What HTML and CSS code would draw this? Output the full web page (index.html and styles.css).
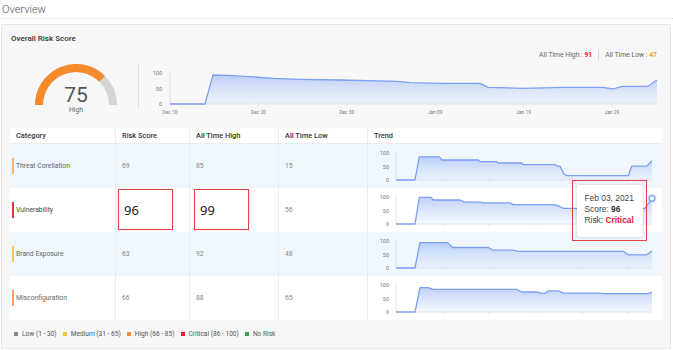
FILE: index.html
```html
<!DOCTYPE html>
<html>
<head>
<meta charset="utf-8">
<link rel="stylesheet" href="styles.css">
</head>
<body>
<div class="page">
  <div class="pagehead">Overview</div>
  <div class="card">
    <div class="card-title">Overall Risk Score</div>
    <div class="stats">
      <span>All Time High : <b class="hi">91</b></span>
      <span class="vsep"></span>
      <span>All Time Low : <b class="lo">47</b></span>
    </div>
    <div class="summary">
      <div class="gauge">
        <svg width="128" height="55" viewBox="0 0 128 55">
          <path d="M29 41 A37 37 0 0 1 103 41" fill="none" stroke="#d4d4d4" stroke-width="8"/>
          <path d="M29 41 A37 37 0 0 1 92.16 14.84" fill="none" stroke="#f68a2b" stroke-width="8"/>
          <text x="66" y="37.7" text-anchor="middle" class="g-num">75</text>
          <text x="66" y="48" text-anchor="middle" class="g-lbl">High</text>
        </svg>
      </div>
      <div class="divider"></div>
      <svg class="main-chart" width="522" height="55" viewBox="0 0 522 55">
        <defs>
          <linearGradient id="fillg" x1="0" y1="0" x2="0" y2="1">
            <stop offset="0" stop-color="#a8c1f7" stop-opacity="0.75"/>
            <stop offset="1" stop-color="#dbe6fb" stop-opacity="0.35"/>
          </linearGradient>
        </defs>
        <g class="axis-lbl" text-anchor="end">
          <text x="22" y="11">100</text>
          <text x="22" y="27">50</text>
          <text x="22" y="42">0</text>
        </g>
        <line x1="30" y1="8" x2="30" y2="40" class="ax"/>
        <line x1="30" y1="40" x2="517" y2="40" class="ax"/>
        <g class="ax">
          <line x1="30" y1="40" x2="30" y2="42"/>
          <line x1="118.4" y1="40" x2="118.4" y2="42"/>
          <line x1="206.8" y1="40" x2="206.8" y2="42"/>
          <line x1="295.2" y1="40" x2="295.2" y2="42"/>
          <line x1="383.6" y1="40" x2="383.6" y2="42"/>
          <line x1="472" y1="40" x2="472" y2="42"/>
        </g>
        <g class="tick-lbl" text-anchor="middle">
          <text x="30" y="50">Dec 10</text>
          <text x="118.4" y="50">Dec 20</text>
          <text x="206.8" y="50">Dec 30</text>
          <text x="295.2" y="50">Jan 09</text>
          <text x="383.6" y="50">Jan 19</text>
          <text x="472" y="50">Jan 29</text>
        </g>
        <polygon class="area" points="30,40 65,40 73,11 93,11.7 110,12.7 133,14.3 160,15.3 200,16 257,17.3 270,18.7 303,19.3 340,19.3 348,23.3 383,24.3 423,23.3 463,23.3 473,25 482,22.3 508,22.3 517,16 517,40"/>
        <polyline class="line" points="30,40 65,40 73,11 93,11.7 110,12.7 133,14.3 160,15.3 200,16 257,17.3 270,18.7 303,19.3 340,19.3 348,23.3 383,24.3 423,23.3 463,23.3 473,25 482,22.3 508,22.3 517,16"/>
      </svg>
    </div>

    <div class="table">
      <div class="row head">
        <div class="cell">Category</div>
        <div class="cell">Risk Score</div>
        <div class="cell">All Time High</div>
        <div class="cell">All Time Low</div>
        <div class="cell">Trend</div>
      </div>

      <div class="row alt">
        <div class="cell"><span class="cat c-high">Threat Corellation</span></div>
        <div class="cell val">69</div>
        <div class="cell val">85</div>
        <div class="cell val">15</div>
        <div class="cell trend">
          <svg width="295" height="44" viewBox="0 0 295 44">
            <g class="axis-lbl" text-anchor="end"><text x="21" y="11">100</text><text x="21" y="24.5">50</text><text x="21" y="38">0</text></g>
            <line x1="28" y1="8" x2="28" y2="36" class="ax"/>
            <line x1="28" y1="36" x2="284" y2="36" class="ax"/>
            <g class="ax"><line x1="75" y1="36" x2="75" y2="38"/><line x1="121" y1="36" x2="121" y2="38"/><line x1="168" y1="36" x2="168" y2="38"/><line x1="214" y1="36" x2="214" y2="38"/><line x1="260" y1="36" x2="260" y2="38"/></g>
            <polygon class="area" points="28,36 47,36 51.3,12.8 71.3,12.8 73.7,16 110.3,16 112,17.6 128.7,17.6 130,19 153.7,19 155,20.6 187,20.6 189,22.2 192,22.2 196,30.1 199,31.7 260.3,31.7 263.7,22.2 278.7,22.2 284,16.6 284,36"/>
            <polyline class="line" points="28,36 47,36 51.3,12.8 71.3,12.8 73.7,16 110.3,16 112,17.6 128.7,17.6 130,19 153.7,19 155,20.6 187,20.6 189,22.2 192,22.2 196,30.1 199,31.7 260.3,31.7 263.7,22.2 278.7,22.2 284,16.6"/>
          </svg>
        </div>
      </div>

      <div class="row">
        <div class="cell"><span class="cat c-crit dark">Vulnerability</span></div>
        <div class="cell boxed"><div class="mark">96</div></div>
        <div class="cell boxed wide"><div class="mark">99</div></div>
        <div class="cell val">56</div>
        <div class="cell trend">
          <svg width="295" height="44" viewBox="0 0 295 44">
            <g class="axis-lbl" text-anchor="end"><text x="21" y="11">100</text><text x="21" y="24.5">50</text><text x="21" y="38">0</text></g>
            <line x1="28" y1="8" x2="28" y2="36" class="ax"/>
            <line x1="28" y1="36" x2="284" y2="36" class="ax"/>
            <g class="ax"><line x1="75" y1="36" x2="75" y2="38"/><line x1="121" y1="36" x2="121" y2="38"/><line x1="168" y1="36" x2="168" y2="38"/><line x1="214" y1="36" x2="214" y2="38"/><line x1="260" y1="36" x2="260" y2="38"/></g>
            <polygon class="area" points="28,36 47,36 51.3,9.3 62.7,9.3 65.3,12 92,12 97,14.1 112,14.1 115.3,14.9 142,14.9 145.3,16.6 185.3,16.6 192,18.5 195.3,20.3 277,20.3 284,10.4 284,36"/>
            <polyline class="line" points="28,36 47,36 51.3,9.3 62.7,9.3 65.3,12 92,12 97,14.1 112,14.1 115.3,14.9 142,14.9 145.3,16.6 185.3,16.6 192,18.5 195.3,20.3 277,20.3 284,10.4"/>
            <circle cx="284" cy="10.4" r="4.5" fill="#7d9ff5" fill-opacity="0.25"/>
            <circle cx="284" cy="10.4" r="2.8" fill="#fff" stroke="#7d9ff5" stroke-width="1.3"/>
          </svg>
          <div class="tip-mark">
            <div class="tooltip">
              <div>Feb 03, 2021</div>
              <div>Score: <b>96</b></div>
              <div>Risk: <b class="crit">Critical</b></div>
            </div>
          </div>
        </div>
      </div>

      <div class="row alt">
        <div class="cell"><span class="cat c-med">Brand Exposure</span></div>
        <div class="cell val">63</div>
        <div class="cell val">92</div>
        <div class="cell val">48</div>
        <div class="cell trend">
          <svg width="295" height="44" viewBox="0 0 295 44">
            <g class="axis-lbl" text-anchor="end"><text x="21" y="11">100</text><text x="21" y="24.5">50</text><text x="21" y="38">0</text></g>
            <line x1="28" y1="8" x2="28" y2="36" class="ax"/>
            <line x1="28" y1="36" x2="284" y2="36" class="ax"/>
            <g class="ax"><line x1="75" y1="36" x2="75" y2="38"/><line x1="121" y1="36" x2="121" y2="38"/><line x1="168" y1="36" x2="168" y2="38"/><line x1="214" y1="36" x2="214" y2="38"/><line x1="260" y1="36" x2="260" y2="38"/></g>
            <polygon class="area" points="28,36 47,36 52,10.6 79.3,10.6 84.7,15.5 120.3,15.5 125.3,18.2 145.3,18.2 150.3,19.3 255.3,19.3 260.3,22.8 278.7,22.8 284,19 284,36"/>
            <polyline class="line" points="28,36 47,36 52,10.6 79.3,10.6 84.7,15.5 120.3,15.5 125.3,18.2 145.3,18.2 150.3,19.3 255.3,19.3 260.3,22.8 278.7,22.8 284,19"/>
          </svg>
        </div>
      </div>

      <div class="row">
        <div class="cell"><span class="cat c-high2">Misconfiguration</span></div>
        <div class="cell val">66</div>
        <div class="cell val">88</div>
        <div class="cell val">65</div>
        <div class="cell trend">
          <svg width="295" height="44" viewBox="0 0 295 44">
            <g class="axis-lbl" text-anchor="end"><text x="21" y="11">100</text><text x="21" y="24.5">50</text><text x="21" y="38">0</text></g>
            <line x1="28" y1="8" x2="28" y2="36" class="ax"/>
            <line x1="28" y1="36" x2="284" y2="36" class="ax"/>
            <g class="ax"><line x1="75" y1="36" x2="75" y2="38"/><line x1="121" y1="36" x2="121" y2="38"/><line x1="168" y1="36" x2="168" y2="38"/><line x1="214" y1="36" x2="214" y2="38"/><line x1="260" y1="36" x2="260" y2="38"/></g>
            <polygon class="area" points="28,36 47,36 52,11.7 60.3,11.7 65.3,13.3 148.7,13.3 153.7,16 168.7,16 173.7,17.4 177,17.4 180.3,14.9 190.3,14.9 195.3,17.1 232,17.1 237,17.6 278.7,17.6 284,16.3 284,36"/>
            <polyline class="line" points="28,36 47,36 52,11.7 60.3,11.7 65.3,13.3 148.7,13.3 153.7,16 168.7,16 173.7,17.4 177,17.4 180.3,14.9 190.3,14.9 195.3,17.1 232,17.1 237,17.6 278.7,17.6 284,16.3"/>
          </svg>
        </div>
      </div>
    </div>

    <div class="legend">
      <span class="lg"><i class="sq s-low"></i>Low (1 - 30)</span>
      <span class="lg"><i class="sq s-med"></i>Medium (31 - 65)</span>
      <span class="lg"><i class="sq s-high"></i>High (66 - 85)</span>
      <span class="lg"><i class="sq s-crit"></i>Critical (86 - 100)</span>
      <span class="lg"><i class="sq s-none"></i>No Risk</span>
    </div>
  </div>
</div>
</body>
</html>
```

FILE: styles.css
```css
* { box-sizing: border-box; }
html, body { margin: 0; padding: 0; background: #fff; }
body { font-family: Roboto, "Liberation Sans", Arial, sans-serif; color: #444; }

.page { width: 673px; }

.pagehead {
  font-size: 11px;
  font-weight: 300;
  color: #555;
  line-height: 17px;
  padding: 1px 0 0 2px;
  border-bottom: 1px dotted #dcdcdc;
}

.card {
  margin: 5px 2px 0 1px;
  border: 1px solid #e6e6e6;
  background: #f7f7f7;
  padding: 9px 8px 9px 8px;
}

.card-title {
  font-size: 8px;
  font-weight: 500;
  color: #333;
  line-height: 10px;
  padding-left: 1px;
}

.stats {
  margin-top: 5px;
  display: flex;
  justify-content: flex-end;
  align-items: center;
  gap: 6px;
  padding-right: 5px;
  font-size: 6.8px;
  line-height: 10px;
  color: #666;
}
.stats b { font-weight: 700; }
.stats .hi { color: #e8202a; }
.stats .lo { color: #f5a623; }
.vsep { width: 1px; height: 11px; background: #d6d6d6; }

.summary {
  margin-top: 4px;
  display: flex;
  align-items: flex-start;
  height: 55px;
}
.gauge { width: 128px; height: 55px; }
.gauge svg { display: block; }
.g-num { font-family: Roboto, sans-serif; font-size: 21px; fill: #555; }
.g-lbl { font-family: Roboto, sans-serif; font-size: 6.8px; fill: #666; }
.divider { width: 1px; height: 45px; background: #dedede; margin-top: 0; }
.main-chart { display: block; margin-left: 1px; }

.axis-lbl { font-family: Roboto, sans-serif; font-size: 5.5px; fill: #777; }
.tick-lbl { font-family: Roboto, sans-serif; font-size: 4.8px; fill: #777; }
.ax { stroke: #dcdcdc; stroke-width: 0.8; fill: none; }
.ax line { stroke: #dcdcdc; stroke-width: 0.8; }
.area { fill: url(#fillg); stroke: none; }
.line { fill: none; stroke: #7d9ff5; stroke-width: 1.3; stroke-linejoin: round; }

.table {
  margin-top: 9px;
  background: #fff;
}
.row {
  display: grid;
  grid-template-columns: 106px 74px 89px 89px 295px;
  height: 44px;
  background: #fff;
}
.row.alt { background: #eff7fd; }
.row.head { height: 16px; border-bottom: 1px solid #ececec; }
.cell {
  border-right: 1px solid #ececec;
  display: flex;
  align-items: center;
  padding-left: 6px;
  font-size: 6.8px;
  color: #777;
}
.cell:last-child { border-right: none; }
.head .cell { font-size: 7.4px; font-weight: 500; color: #333; }

.cat {
  position: relative;
  display: flex;
  align-items: center;
  height: 16px;
  color: #666;
}
.cat::before {
  content: "";
  position: absolute;
  left: -4px;
  top: 0;
  width: 2px;
  height: 16px;
  background: #f7a35c;
}
.cat.dark { color: #444; }
.c-high::before { background: #f9ae74; }
.c-crit::before { background: #e8303a; }
.c-med::before { background: #f8c654; }
.c-high2::before { background: #f6a06a; }

.val { color: #888; }

.cell.boxed { padding: 1px 0 0 2px; align-items: flex-start; }
.cell.boxed.wide { padding-left: 4px; }
.mark {
  width: 55px;
  height: 41px;
  border: 1.5px solid #e04545;
  background: #fff;
  display: flex;
  align-items: center;
  padding-left: 5px;
  font-family: "Noto Sans", "Open Sans", sans-serif;
  font-size: 13px;
  color: #222;
  box-shadow: 0 0 1px rgba(224, 69, 69, 0.4);
}

.cell.trend { padding: 0; position: relative; align-items: stretch; }
.cell.trend svg { display: block; }

.tip-mark {
  position: absolute;
  left: 204px;
  top: -8px;
  width: 75px;
  height: 61px;
  border: 1.5px solid #e04040;
  padding: 3.5px;
}
.tooltip {
  width: 100%;
  height: 100%;
  background: #fff;
  border-radius: 2px;
  box-shadow: 0 0 3px rgba(0, 0, 0, 0.22);
  padding: 8px 0 0 8px;
  font-family: "Liberation Sans", Arial, sans-serif;
  font-size: 8.4px;
  line-height: 11px;
  color: #444;
}
.tooltip b { font-weight: 700; color: #333; }
.tooltip .crit { color: #e8202a; }

.legend {
  margin-top: 9px;
  display: flex;
  align-items: center;
  gap: 6px;
  padding-left: 4px;
  font-size: 6.6px;
  line-height: 10px;
  color: #555;
}
.lg { display: flex; align-items: center; gap: 4px; }
.sq { display: inline-block; width: 4px; height: 4px; }
.s-low { background: #8a8a8a; }
.s-med { background: #f7c13c; }
.s-high { background: #f58a30; }
.s-crit { background: #e8202a; }
.s-none { background: #2ea84a; }
```
